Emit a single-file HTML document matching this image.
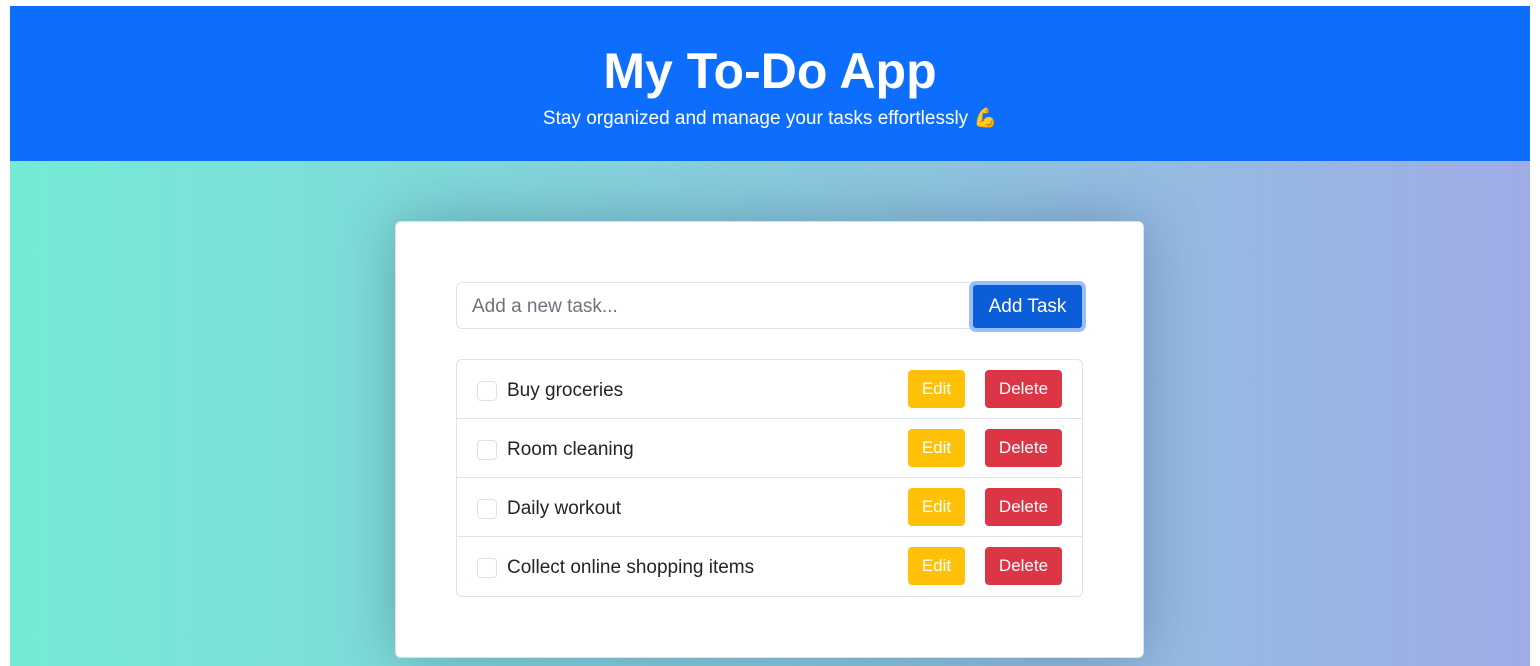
<!DOCTYPE html>
<html><head><meta charset="utf-8"><style>
*{box-sizing:border-box;margin:0;padding:0}
html,body{width:1540px;height:666px;overflow:hidden;background:#fff;font-family:"Liberation Sans",sans-serif}
.wrap{position:absolute;left:10px;top:6px;width:1520px;height:660px;background:linear-gradient(90deg,#74ebd5,#9face6)}
.hdr{height:155px;background:#0d6efd;color:#fff;text-align:center}
.hdr h1{font-size:50px;font-weight:bold;padding-top:36px;line-height:58px}
.hdr p{font-size:19px;margin-top:6px}
.card{position:absolute;left:385px;top:215px;width:749px;height:437px;background:#fff;border:1px solid #dee2e6;border-radius:6px;box-shadow:0 0 60px rgba(0,0,60,.25)}
.inp{position:absolute;left:60px;top:60px;width:516px;height:47px;border:1px solid #dee2e6;border-radius:6px 0 0 6px;font-size:19px;color:#6c757d;padding:13px 15px}
.btn{position:absolute;left:573px;top:59px;width:117px;height:51px;background:#0b5ed7;border:4px solid #98bff9;border-radius:7px;color:#fff;font-size:19px;text-align:center;line-height:43px}
.list{position:absolute;left:60px;top:137px;width:627px;height:238px;border:1px solid #dee2e6;border-radius:6px}
.row{height:59px;border-bottom:1px solid #dee2e6;position:relative;font-size:19px;color:#212529}
.row:last-child{border-bottom:none}
.cb{position:absolute;left:20px;top:21px;width:20px;height:20px;border:1px solid #dee2e6;border-radius:4px}
.t{position:absolute;left:50px;top:20px}
.e,.d{position:absolute;top:10px;height:38px;border-radius:4px;color:#fff;font-size:17px;text-align:center;line-height:38px}
.e{left:451px;width:57px;background:#ffc107}
.d{left:528px;width:77px;background:#dc3545}
</style></head><body>
<div class="wrap">
<div class="hdr"><h1>My To-Do App</h1><p>Stay organized and manage your tasks effortlessly 💪</p></div>
<div class="card">
<div class="inp">Add a new task...</div>
<div class="btn">Add Task</div>
<div class="list">
<div class="row"><div class="cb"></div><div class="t">Buy groceries</div><div class="e">Edit</div><div class="d">Delete</div></div>
<div class="row"><div class="cb"></div><div class="t">Room cleaning</div><div class="e">Edit</div><div class="d">Delete</div></div>
<div class="row"><div class="cb"></div><div class="t">Daily workout</div><div class="e">Edit</div><div class="d">Delete</div></div>
<div class="row"><div class="cb"></div><div class="t">Collect online shopping items</div><div class="e">Edit</div><div class="d">Delete</div></div>
</div>
</div>
</div>
</body></html>
